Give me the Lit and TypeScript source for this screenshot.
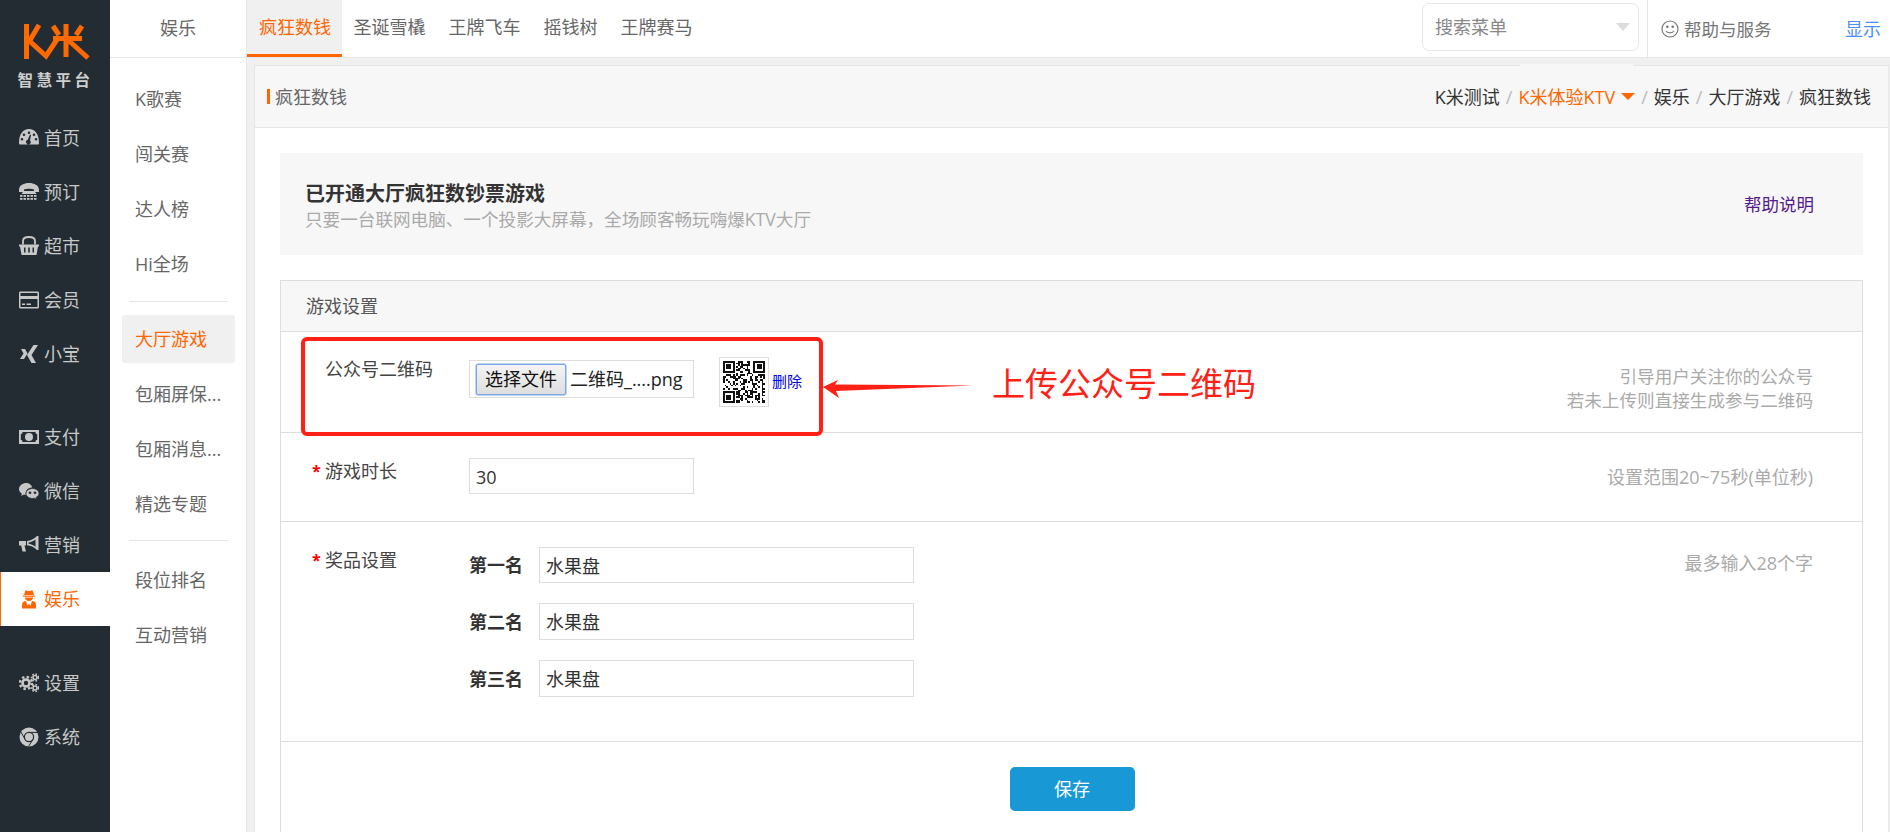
import { LitElement, html, css, svg } from "lit";
import { customElement } from "lit/decorators.js";

const ICONS: Record<string, unknown> = {
  home: svg`<path fill-rule="evenodd" d="M0 15C0 6 4 1 10 1s10 5 10 14c0 1-.5 1.500-1.500 1.500H1.500C.5 16.500 0 16 0 15zM10 3.500a1.300 1.300 0 100 2.600 1.300 1.300 0 000-2.600zM5 5.500a1.300 1.300 0 100 2.600 1.300 1.300 0 000-2.600zM15 5.500a1.300 1.300 0 100 2.600 1.300 1.300 0 000-2.600zM3 10a1.300 1.300 0 100 2.600A1.300 1.300 0 003 10zM17 10a1.300 1.300 0 100 2.600A1.300 1.300 0 0017 10zM11 6.500L8.700 11.800a2.300 2.300 0 102.300.6L12 7z"/>`,
  book: svg`<path d="M0 8C0 3 5 1 10 1s10 2 10 7v2h-5V7.500C13 6.500 7 6.500 5 7.500V10H0z"/><path d="M4.500 9h11l2 3H2.500z"/><g><rect x="1" y="13" width="2.500" height="1.800"/><rect x="4.500" y="13" width="2.500" height="1.800"/><rect x="8" y="13" width="2.500" height="1.800"/><rect x="11.500" y="13" width="2.500" height="1.800"/><rect x="15" y="13" width="2.500" height="1.800"/><rect x="1" y="16" width="2.500" height="1.800"/><rect x="4.500" y="16" width="2.500" height="1.800"/><rect x="8" y="16" width="2.500" height="1.800"/><rect x="11.500" y="16" width="2.500" height="1.800"/><rect x="15" y="16" width="2.500" height="1.800"/></g>`,
  basket: svg`<path fill-rule="evenodd" d="M0 8.500h20v2h-1L17.500 19h-15L1 10.500H0zM5 11.500v5h1.500v-5zM9.200 11.500v5h1.600v-5zM13.500 11.500v5H15v-5z"/><path fill="none" stroke="currentColor" stroke-width="1.800" d="M4 8.500V5c0-3 2-4 6-4s6 1 6 4v3.500"/>`,
  card: svg`<path fill-rule="evenodd" d="M1.500 1.500h17c.8 0 1.500.7 1.500 1.500v14c0 .8-.7 1.500-1.500 1.500h-17C.7 18.500 0 17.800 0 17V3c0-.8.7-1.500 1.500-1.500zM1.500 3v3h17V3zM1.500 9v8h17V9zM3 13.500h3V15H3zM7.500 13.500H12V15H7.500z"/>`,
  xing: svg`<path d="M2 5h4l2.500 4.500L5 15H1l3.500-5.500z"/><path d="M14.500 1H19l-6.500 10L17 19h-4.500L8 11z"/>`,
  pay: svg`<path fill-rule="evenodd" d="M0 3h20v14H0zM3.500 5C3.500 6.500 3 7 1.800 7v6c1.200 0 1.700.5 1.700 2h13c0-1.500.5-2 1.700-2V7c-1.200 0-1.700-.5-1.700-2zM10 6a4 4 0 110 8 4 4 0 010-8z"/><path d="M9 7.500h1.800V12H12v1H8v-1h1.200V9L8.300 9.500v-1z"/>`,
  wechat: svg`<path d="M7.500 2C3.400 2 0 4.700 0 8c0 2 1.200 3.600 2.900 4.700L2.200 15l2.700-1.400c.7.200 1.500.3 2.100.3-.2-.6-.3-1.100-.3-1.700 0-3.300 3-5.700 6.600-5.700C12.500 3.900 10.200 2 7.500 2z"/><path fill-rule="evenodd" d="M13.500 7.500c-3.500 0-6.500 2.200-6.500 5s3 5 6.500 5c.7 0 1.400-.1 2-.3l2.300 1.200-.6-2c1.700-1 2.800-2.400 2.800-3.900 0-2.800-2.900-5-6.500-5zM11 10.800a1 1 0 100 2 1 1 0 000-2zM16 10.800a1 1 0 100 2 1 1 0 000-2z" fill="currentColor" stroke="#222c32" stroke-width=".8"/>`,
  horn: svg`<path fill-rule="evenodd" d="M18 1h1.500v14H18c-3-3-6.500-4.400-10-4.700V6C11.500 5.600 15 4 18 1zM16.500 4.500c-2.300 1.800-4.800 2.800-7 3v1.200c2.200.2 4.700 1.200 7 3z"/><path d="M0 6h7v4.500H5.500l1.500 6H3.500L2.200 10.500H0z"/>`,
  fun: svg`<path d="M6.300 1.500c1-.4 2.500.5 3.700.5s2.700-.9 3.700-.5L15 6H5z"/><path d="M3.800 6.600h12.400v1.200H3.800z"/><path d="M6 8.500h8c0 2-1.500 3.500-4 3.500S6 10.500 6 8.500z"/><path d="M3 19.500V16c0-2.500 1.500-4 4-4l1.600 5L10 14.500l1.400 2.500L13 12c2.500 0 4 1.500 4 4v3.500z"/>`,
  gear: svg`<circle cx="7" cy="10" r="3.500" fill="none" stroke="currentColor" stroke-width="2.600"/><circle cx="7" cy="10" r="6" fill="none" stroke="currentColor" stroke-width="2.400" stroke-dasharray="2.400 2.300"/><circle cx="16" cy="4.500" r="2" fill="none" stroke="currentColor" stroke-width="1.600"/><circle cx="16" cy="4.500" r="3.500" fill="none" stroke="currentColor" stroke-width="1.500" stroke-dasharray="1.600 1.700"/><circle cx="16" cy="15" r="2" fill="none" stroke="currentColor" stroke-width="1.600"/><circle cx="16" cy="15" r="3.500" fill="none" stroke="currentColor" stroke-width="1.500" stroke-dasharray="1.600 1.700"/>`,
  chrome: svg`<circle cx="10" cy="10" r="9.500"/><circle cx="10" cy="10" r="4.600" fill="none" stroke="#222c32" stroke-width="1.200"/><path d="M10 5.400h9M14 12.300L9.500 19.500M6 12.300L2 5" fill="none" stroke="#222c32" stroke-width="1"/>`,
};

const GROUPS = [
  [["home", "首页"], ["book", "预订"], ["basket", "超市"], ["card", "会员"], ["xing", "小宝"]],
  [["pay", "支付"], ["wechat", "微信"], ["horn", "营销"], ["fun", "娱乐"]],
  [["gear", "设置"], ["chrome", "系统"]],
];

const SUBMENU = [
  ["K歌赛", "闯关赛", "达人榜", "Hi全场"],
  ["大厅游戏", "包厢屏保...", "包厢消息...", "精选专题"],
  ["段位排名", "互动营销"],
];

const TABS = ["疯狂数钱", "圣诞雪橇", "王牌飞车", "摇钱树", "王牌赛马"];
const CRUMB_TAIL = ["娱乐", "大厅游戏", "疯狂数钱"];

function qrPath(): string {
  const n = 25;
  let seed = 7321;
  const rnd = () => {
    seed = (seed * 1103515245 + 12345) & 0x7fffffff;
    return (seed >> 16) & 1;
  };
  const inFinder = (x: number, y: number) =>
    (x < 8 && y < 8) || (x >= n - 8 && y < 8) || (x < 8 && y >= n - 8);
  let d = "";
  const finder = (ox: number, oy: number) => {
    d += `M${ox} ${oy}h7v7h-7zM${ox + 1} ${oy + 1}v5h5v-5zM${ox + 2} ${oy + 2}h3v3h-3z`;
  };
  finder(0, 0);
  finder(n - 7, 0);
  finder(0, n - 7);
  for (let y = 0; y < n; y++) {
    for (let x = 0; x < n; x++) {
      if (!inFinder(x, y) && rnd()) d += `M${x} ${y}h1v1h-1z`;
    }
  }
  return d;
}

@customElement("app-root")
export class AppRoot extends LitElement {
  static styles = css`
    :host {
      display: block;
      width: 100%;
      height: 832px;
      overflow: hidden;
      font-family: "Open Sans", "Noto Sans CJK SC", sans-serif;
      font-size: 18px;
      line-height: 24px;
      color: #333;
    }
    * { box-sizing: border-box; }
    .app { position: relative; display: flex; height: 832px; overflow: hidden; background: #f0f0f0; }

    .side { flex: none; width: 110px; background: #222c32; color: #c8c8c8; }
    .logo { height: 111px; display: flex; flex-direction: column; align-items: center; padding-top: 24px; }
    .logo svg { display: block; margin-left: 3px; }
    .logo-text { margin-top: 12px; font-size: 15.500px; line-height: 16px; font-weight: 700; letter-spacing: 3.500px; margin-left: 1px; color: #cfcfcf; white-space: nowrap; }
    .side-group + .side-group { margin-top: 29px; }
    .side-group:last-child { margin-top: 30px; }
    .side-item { height: 54px; display: flex; align-items: center; padding-left: 19px; gap: 5px; }
    .side-item svg { flex: none; display: block; fill: currentColor; }
    .side-item.on { background: #fff; color: #ff6600; box-shadow: inset 1px 0 0 #ff6600; }

    .sub { flex: none; width: 137px; background: #fff; border-right: 1px solid #e6e6e6; color: #666; }
    .sub-head { height: 58px; border-bottom: 1px solid #e6e6e6; display: flex; align-items: center; justify-content: center; padding-bottom: 1px; }
    .sub-list { padding: 14px 11px 0 12px; }
    .sub-item { height: 55px; line-height: 55px; padding-left: 13px; white-space: nowrap; }
    .sub-item.on { height: 48px; line-height: 48px; margin: 3px 0 4px; background: #f0f0f0; color: #ff6600; border-radius: 3px; }
    .sub-rule { height: 1px; background: #e6e6e6; margin: 9px 7px 13px 7px; }
    .sub-rule.b { margin: 8px 7px 11.500px 7px; }

    .main { flex: 1; min-width: 0; display: flex; flex-direction: column; }
    .top { flex: none; height: 58px; background: #fff; border-bottom: 1px solid #e6e6e6; display: flex; align-items: stretch; }
    .tabs { display: flex; }
    .tab { padding: 0 11.500px; height: 57px; line-height: 55px; color: #666; white-space: nowrap; }
    .tab.on { width: 95px; padding-left: 12px; background: #f0f0f0; color: #ff6600; border-bottom: 3px solid #ff6600; }
    .top-right { margin-left: auto; display: flex; align-items: center; height: 57px; }
    .search { width: 217px; height: 48px; margin-top: -3px; border: 1px solid #e6e6e6; border-radius: 7px; display: flex; align-items: center; justify-content: space-between; padding: 0 8px 0 12px; color: #888; }
    .caret-grey { width: 0; height: 0; border-left: 7.500px solid transparent; border-right: 7.500px solid transparent; border-top: 8px solid #dcdcdc; }
    .help { margin-left: 8px; height: 57px; border-left: 1px solid #e6e6e6; padding-left: 13px; display: flex; align-items: center; gap: 5px; color: #777; width: 243px; font-size: 17.500px; }
    .help svg { display: block; flex: none; }
    .show { color: #4a90f5; margin-left: auto; margin-right: 9px; font-size: 18px; }

    .panel { flex: 1; margin: 7px 1px 0 7px; border: 1px solid #e6e6e6; border-bottom: 0; background: #fff; min-height: 0; overflow: hidden; }
    .panel-head { height: 62px; background: #f7f7f7; border-bottom: 1px solid #e6e6e6; display: flex; align-items: center; justify-content: space-between; padding: 0 17px 0 12px; }
    .panel-title { display: flex; align-items: center; gap: 5px; color: #666; }
    .panel-title i { display: block; width: 3px; height: 15px; background: #ff6600; }
    .crumbs { display: flex; align-items: center; color: #333; white-space: nowrap; }
    .crumbs .sep { color: #bbb; margin: 0 6px; }
    .crumbs .cur { color: #ff6600; display: flex; align-items: center; gap: 6px; }
    .caret-orange { width: 0; height: 0; border-left: 7px solid transparent; border-right: 7px solid transparent; border-top: 7px solid #ff6600; }

    .body { padding: 25px 25px 0; }
    .banner { height: 102px; background: #f7f7f7; display: flex; align-items: center; justify-content: space-between; padding: 0 49px 0 25px; }
    .banner h1 { margin: 0; font-size: 20px; line-height: 26px; font-weight: 700; color: #333; }
    .banner p { margin: 0; font-size: 17.600px; color: #aaa; line-height: 24px; }
    .banner-text { padding-top: 3px; }
    .help-link { color: #551a8b; font-size: 17.500px; }

    .box { margin-top: 25px; border: 1px solid #ddd; border-bottom: 0; }
    .box-head { height: 51px; line-height: 50px; background: #f7f7f7; border-bottom: 1px solid #ddd; padding-left: 25px; color: #555; }
    .row { display: grid; grid-template-columns: 188px 1fr auto; border-bottom: 1px solid #ddd; }
    .row.r1 { height: 101px; }
    .row.r2 { height: 89px; }
    .row.r3 { height: 220px; }
    .label { display: flex; padding: 26px 0 0 31px; color: #444; }
    .row.r1 .label { padding-top: 25px; }
    .star { width: 13px; color: #f00; font-weight: 700; font-size: 16px; }
    .hint { padding: 32px 49px 0 0; color: #aaa; text-align: right; }
    .row.r1 .hint { font-size: 17.600px; }
    .row.r3 .hint { padding-top: 29px; }
    .field { padding-top: 25px; }
    .row.r1 .field { display: flex; align-items: flex-start; padding-top: 25px; }

    .file { width: 225px; height: 38px; margin-top: 3px; border: 1px solid #ddd; display: flex; align-items: center; padding-left: 6px; gap: 4px; color: #222; white-space: nowrap; }
    .file-btn { width: 90px; height: 31px; line-height: 29px; text-align: center; border: 1px solid #7aa7e6; border-radius: 2px; box-shadow: 0 0 0 .5px #7aa7e6; background: linear-gradient(#f4f4f4, #dedede); color: #111; }
    .qr { width: 50px; height: 50px; margin-left: 25px; border: 1px solid #ddd; display: flex; align-items: center; justify-content: center; }
    .qr svg { display: block; }
    .del { margin: 14px 0 0 3px; font-size: 15px; line-height: 20px; color: #0000ee; }

    .input { height: 36px; line-height: 36px; border: 1px solid #ddd; padding-left: 6px; color: #333; background: #fff; }
    .input.short { width: 225px; }
    .prizes { display: flex; flex-direction: column; gap: 20px; }
    .prize { display: flex; align-items: center; }
    .prize b { width: 70px; font-weight: 700; color: #333; }
    .prize .input { width: 375px; height: 36px; }
    .prize + .prize .input { height: 37px; }

    .save-row { padding: 25px 0 40px; display: flex; justify-content: center; }
    .save { width: 125px; height: 44px; line-height: 44px; text-align: center; background: #1899d6; color: #fff; border-radius: 5px; margin-left: 1px; }

    .mark { position: absolute; left: 301px; top: 337px; width: 522px; height: 99px; border: 4px solid #ff2116; border-radius: 6px; pointer-events: none; }
    .arrow { position: absolute; left: 820px; top: 376px; display: block; }
    .note { position: absolute; left: 992px; top: 361px; font-size: 33px; line-height: 46px; color: #ff2116; white-space: nowrap; }
    .ghost { position: absolute; left: 1520px; top: 64px; width: 113px; height: 2px; background: #f7f7f7; }
  `;

  render() {
    return html`
      <div class="app">
        <aside class="side">
          <div class="logo">
            <svg width="66" height="36" viewBox="0 0 66 36" fill="none" stroke="#ff6a00" stroke-width="5" aria-label="K米">
              <path d="M2.500 0v35"/>
              <path d="M15 1 5.500 17l16.500 15L34 14"/>
              <path d="M29 14.500h29M42 0v33M43 15l21 19M29 2l6 9M58 2l-6 9"/>
            </svg>
            <div class="logo-text">智慧平台</div>
          </div>
          ${GROUPS.map(
            (g) => html`<div class="side-group">
              ${g.map(
                ([ic, t]) => html`<div class="side-item ${t === "娱乐" ? "on" : ""}">
                  <svg width="20" height="20" viewBox="0 0 20 20">${ICONS[ic]}</svg><span>${t}</span>
                </div>`
              )}
            </div>`
          )}
        </aside>

        <nav class="sub">
          <div class="sub-head">娱乐</div>
          <div class="sub-list">
            ${SUBMENU.map(
              (g, i) => html`
                ${i > 0 ? html`<div class="sub-rule ${i === 2 ? "b" : ""}"></div>` : ""}
                ${g.map((t) => html`<div class="sub-item ${t === "大厅游戏" ? "on" : ""}">${t}</div>`)}
              `
            )}
          </div>
        </nav>

        <div class="main">
          <header class="top">
            <div class="tabs">
              ${TABS.map((t, i) => html`<div class="tab ${i === 0 ? "on" : ""}">${t}</div>`)}
            </div>
            <div class="top-right">
              <div class="search"><span>搜索菜单</span><i class="caret-grey"></i></div>
              <div class="help">
                <svg width="18" height="18" viewBox="0 0 18 18" fill="none" stroke="#777" stroke-width="1.200">
                  <circle cx="9" cy="9" r="8"/>
                  <path d="M5 11c1.500 2.500 6.500 2.500 8 0"/>
                  <circle cx="6.300" cy="6.800" r=".7" fill="#777"/>
                  <circle cx="11.700" cy="6.800" r=".7" fill="#777"/>
                </svg>
                <span>帮助与服务</span>
                <span class="show">显示</span>
              </div>
            </div>
          </header>

          <section class="panel">
            <div class="panel-head">
              <div class="panel-title"><i></i><span>疯狂数钱</span></div>
              <div class="crumbs">
                <span>K米测试</span><span class="sep">/</span>
                <span class="cur">K米体验KTV<i class="caret-orange"></i></span>
                ${CRUMB_TAIL.map((t) => html`<span class="sep">/</span><span>${t}</span>`)}
              </div>
            </div>
            <div class="body">
              <div class="banner">
                <div class="banner-text">
                  <h1>已开通大厅疯狂数钞票游戏</h1>
                  <p>只要一台联网电脑、一个投影大屏幕，全场顾客畅玩嗨爆KTV大厅</p>
                </div>
                <span class="help-link">帮助说明</span>
              </div>

              <div class="box">
                <div class="box-head">游戏设置</div>
                <div class="row r1">
                  <div class="label"><span class="star"></span><span>公众号二维码</span></div>
                  <div class="field">
                    <div class="file"><span class="file-btn">选择文件</span><span>二维码_....png</span></div>
                    <div class="qr">
                      <svg width="42" height="42" viewBox="0 0 25 25" shape-rendering="crispEdges" fill-rule="evenodd"><path d="${qrPath()}" fill="#111"/></svg>
                    </div>
                    <span class="del">删除</span>
                  </div>
                  <div class="hint">引导用户关注你的公众号<br />若未上传则直接生成参与二维码</div>
                </div>
                <div class="row r2">
                  <div class="label"><span class="star">*</span><span>游戏时长</span></div>
                  <div class="field"><div class="input short">30</div></div>
                  <div class="hint">设置范围20~75秒(单位秒)</div>
                </div>
                <div class="row r3">
                  <div class="label"><span class="star">*</span><span>奖品设置</span></div>
                  <div class="field prizes">
                    <div class="prize"><b>第一名</b><div class="input">水果盘</div></div>
                    <div class="prize"><b>第二名</b><div class="input">水果盘</div></div>
                    <div class="prize"><b>第三名</b><div class="input">水果盘</div></div>
                  </div>
                  <div class="hint">最多输入28个字</div>
                </div>
                <div class="save-row"><div class="save">保存</div></div>
              </div>
            </div>
          </section>
        </div>

        <div class="ghost"></div>
        <div class="mark"></div>
        <svg class="arrow" width="156" height="24" viewBox="0 0 156 24">
          <path d="M3 11 18 4l-3 4.500L153 9.500 16 15l3 7z" fill="#ff2116"/>
        </svg>
        <div class="note">上传公众号二维码</div>
      </div>
    `;
  }
}
